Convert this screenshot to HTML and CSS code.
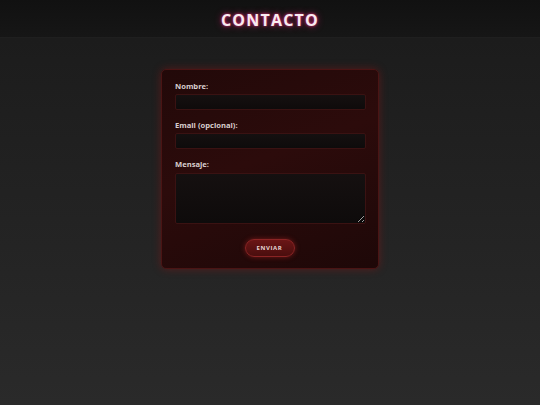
FILE: index.html
```html
<!DOCTYPE html>
<html lang="es">
<head>
<meta charset="utf-8">
<title>Contacto</title>
<link rel="stylesheet" href="styles.css">
</head>
<body>
<header class="top">
  <h1 class="title">CONTACTO</h1>
</header>
<main class="main">
  <form class="card">
    <label class="label" for="n">Nombre:</label>
    <input class="field" id="n" type="text">
    <label class="label" for="e">Email (opcional):</label>
    <input class="field" id="e" type="text">
    <label class="label" for="m">Mensaje:</label>
    <textarea class="field area" id="m"></textarea>
    <div class="actions">
      <button class="btn" type="button">ENVIAR</button>
    </div>
  </form>
</main>
</body>
</html>
```
FILE: styles.css
```css
html, body {
  margin: 0;
  padding: 0;
}
body {
  width: 540px;
  height: 405px;
  overflow: hidden;
  font-family: "Open Sans", "DejaVu Sans", sans-serif;
  background: linear-gradient(to bottom, #1a1a1a 0px, #1d1d1d 60px, #2a2a2a 405px);
}
.top {
  height: 37px;
  background: linear-gradient(to bottom, #111111, #161616);
  border-bottom: 1px solid #1f1f1f;
  display: flex;
  align-items: center;
  justify-content: center;
}
.title {
  margin: 3px 0 0 0;
  font-size: 16px;
  font-weight: 700;
  letter-spacing: 1.2px;
  color: #f8eaf0;
  text-shadow: 0 0 3px #e0307a, 0 0 7px #9a1850;
  line-height: 1;
}
.main {
  display: flex;
  justify-content: center;
  padding-top: 31px;
}
.card {
  width: 218px;
  height: 200px;
  box-sizing: border-box;
  padding: 11px 14px 0 13px;
  border-radius: 5px;
  border: 1px solid #4a1414;
  background: linear-gradient(160deg, #220909 0%, #2c0b0b 45%, #1e0808 100%);
  box-shadow: 0 0 8px rgba(150, 20, 20, 0.45);
  display: flex;
  flex-direction: column;
}
.label {
  font-size: 7.6px;
  font-weight: 700;
  color: #d9cfcf;
  line-height: 10px;
  margin-bottom: 3px;
}
.field {
  display: block;
  width: 191px;
  height: 16px;
  box-sizing: border-box;
  margin: 0 0 10px 0;
  border: 1px solid #3a1212;
  border-radius: 2px;
  background: linear-gradient(to bottom, #151010, #0e0b0b);
  padding: 0;
  outline: none;
}
.area {
  height: 51px;
  margin-top: 1px;
  margin-bottom: 15px;
  resize: vertical;
}
.actions {
  display: flex;
  justify-content: center;
}
.btn {
  width: 50px;
  height: 18px;
  border-radius: 9px;
  border: 1px solid #8a2424;
  background: linear-gradient(to bottom, #6a1616, #4a0e0e);
  box-shadow: 0 0 5px rgba(200, 40, 40, 0.5);
  color: #e8d4d4;
  font-family: "Open Sans", "DejaVu Sans", sans-serif;
  font-size: 6px;
  font-weight: 700;
  letter-spacing: 0.6px;
  padding: 0;
  cursor: pointer;
}
```
